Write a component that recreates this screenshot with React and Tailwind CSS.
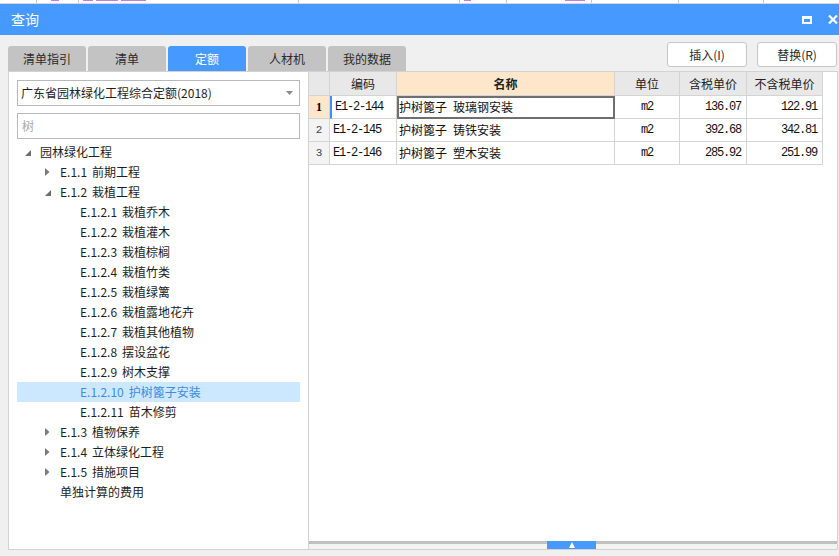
import React from 'react';

const tabs = ['清单指引', '清单', '定额', '人材机', '我的数据'];

const tree = [
  { label: '园林绿化工程', level: 0, toggle: 'open' },
  { label: 'E.1.1 前期工程', level: 1, toggle: 'closed' },
  { label: 'E.1.2 栽植工程', level: 1, toggle: 'open' },
  { label: 'E.1.2.1 栽植乔木', level: 2 },
  { label: 'E.1.2.2 栽植灌木', level: 2 },
  { label: 'E.1.2.3 栽植棕榈', level: 2 },
  { label: 'E.1.2.4 栽植竹类', level: 2 },
  { label: 'E.1.2.5 栽植绿篱', level: 2 },
  { label: 'E.1.2.6 栽植露地花卉', level: 2 },
  { label: 'E.1.2.7 栽植其他植物', level: 2 },
  { label: 'E.1.2.8 摆设盆花', level: 2 },
  { label: 'E.1.2.9 树木支撑', level: 2 },
  { label: 'E.1.2.10 护树篦子安装', level: 2, selected: true },
  { label: 'E.1.2.11 苗木修剪', level: 2 },
  { label: 'E.1.3 植物保养', level: 1, toggle: 'closed' },
  { label: 'E.1.4 立体绿化工程', level: 1, toggle: 'closed' },
  { label: 'E.1.5 措施项目', level: 1, toggle: 'closed' },
  { label: '单独计算的费用', level: 1 },
];

const rows = [
  { code: 'E1-2-144', name: '护树篦子\u2002玻璃钢安装', unit: 'm2', tax: '136.07', notax: '122.91' },
  { code: 'E1-2-145', name: '护树篦子\u2002铸铁安装', unit: 'm2', tax: '392.68', notax: '342.81' },
  { code: 'E1-2-146', name: '护树篦子\u2002塑木安装', unit: 'm2', tax: '285.92', notax: '251.99' },
];

const indent = ['pl-0', 'pl-[20px]', 'pl-[40px]'];

function Toggle({ type }) {
  if (type === 'open') {
    return (
      <svg width="7" height="7" viewBox="0 0 7 7" className="mt-[3px]">
        <polygon points="6,0 6,6 0,6" fill="#6e6e6e" />
      </svg>
    );
  }
  if (type === 'closed') {
    return (
      <svg width="5" height="8" viewBox="0 0 5 8">
        <polygon points="0,0 4.5,4 0,8" fill="#7a7a7a" />
      </svg>
    );
  }
  return null;
}

function TreeRow({ item }) {
  // split code and title so the gap between them is a bit wider, like the original font
  const sp = item.label.indexOf(' ');
  const code = sp > 0 ? item.label.slice(0, sp) : '';
  const title = sp > 0 ? item.label.slice(sp + 1) : item.label;
  return (
    <div
      className={
        'h-[20px] flex items-center ' +
        indent[item.level] +
        (item.selected ? ' bg-[#cce8ff] text-[#3d8de0]' : ' text-[#1e1e1e]')
      }
    >
      <div className="w-[23px] pl-[8px] flex items-center">
        <Toggle type={item.toggle} />
      </div>
      <span className="text-[12px] whitespace-nowrap">
        {code && <span className="mr-[5px]">{code}</span>}
        {title}
      </span>
    </div>
  );
}

function TopStrip() {
  // a sliver of the window that sits behind the dialog
  return (
    <div className="h-[4px] bg-white flex border-b border-[#d6d6d6] overflow-hidden">
      <div className="w-[37px] border-r border-[#c8c8c8]" />
      <div className="w-[42px] border-r border-[#c8c8c8] flex items-start pl-[14px]">
        <div className="w-[8px] h-[1px] bg-[#c77be0]" />
      </div>
      <div className="w-[220px] border-r border-[#c8c8c8] flex gap-[3px] pl-[4px]">
        <div className="w-[10px] h-[1px] bg-[#c77be0]" />
        <div className="w-[22px] h-[1px] bg-[#c77be0]" />
        <div className="w-[25px] h-[1px] bg-[#c77be0]" />
      </div>
      <div className="w-[161px] border-r border-[#c8c8c8]" />
      <div className="w-[47px] border-r border-[#c8c8c8] flex pl-[4px]">
        <div className="w-[7px] h-[1px] bg-[#c77be0]" />
      </div>
      <div className="w-[85px] border-r border-[#c8c8c8] flex pl-[58px]">
        <div className="w-[20px] h-[1px] bg-[#c77be0]" />
      </div>
      <div className="w-[87px] border-r border-[#c8c8c8]" />
      <div className="w-[85px] border-r border-[#c8c8c8]" />
    </div>
  );
}

function Grid() {
  const th = 'h-[24px] border-r border-b border-[#d4d4d4] flex items-center justify-center text-[12px] text-[#222]';
  const td = 'h-[23px] border-r border-b border-[#d4d4d4] flex items-center';
  const mono = "font-['Liberation_Mono',monospace] text-[12px] tracking-[-1.2px] text-[#111]";
  return (
    <div className="w-[514px]">
      <div className="flex bg-[#e8e8e8]">
        <div className={th + ' w-[21px]'} />
        <div className={th + ' w-[67px]'}>编码</div>
        <div className={th + ' w-[218px] bg-[#fde6c9] font-bold'}>名称</div>
        <div className={th + ' w-[65px]'}>单位</div>
        <div className={th + ' w-[67px]'}>含税单价</div>
        <div className={th + ' w-[76px]'}>不含税单价</div>
      </div>
      {rows.map((r, i) => {
        const first = i === 0;
        return (
          <div key={r.code} className="flex bg-white">
            <div
              className={
                td +
                ' w-[21px] justify-center ' +
                (first ? "bg-[#fde6c9] font-bold font-['Liberation_Serif',serif] text-[12px]" : "bg-[#f3f3f3] font-['Liberation_Mono',monospace] text-[11px] text-[#444]")
              }
            >
              {i + 1}
            </div>
            <div className={td + ' w-[67px] pl-[3px] ' + (first ? 'border-l-2 border-l-[#3d8fff] pl-[1px]' : '')}>
              <span className={mono}>{r.code}</span>
            </div>
            <div className={td + ' w-[218px] pl-[2px] text-[12px] text-[#111] ' + (first ? 'outline-2 outline-[#6f6f6f] -outline-offset-2' : '')}>
              {r.name}
            </div>
            <div className={td + ' w-[65px] justify-center'}>
              <span className={mono}>{r.unit}</span>
            </div>
            <div className={td + ' w-[67px] justify-end pr-[5px]'}>
              <span className={mono}>{r.tax}</span>
            </div>
            <div className={td + ' w-[76px] justify-end pr-[5px]'}>
              <span className={mono}>{r.notax}</span>
            </div>
          </div>
        );
      })}
    </div>
  );
}

export default function App() {
  return (
    <div className="w-[839px] h-[556px] bg-[#f0f0f0] flex flex-col overflow-hidden font-['Noto_Sans_CJK_SC','Noto_Sans',sans-serif]">
      <TopStrip />

      {/* title bar */}
      <div className="h-[31px] bg-[#4599ff] flex items-center pl-[11px] text-white">
        <span className="text-[14px]">查询</span>
        <div className="ml-auto flex items-center gap-[16px] pr-[1px]">
          <div className="w-[10px] h-[8px] border-2 border-t-[3px] border-white" />
          <svg width="10" height="9" viewBox="0 0 10 9">
            <path d="M1 0.5 L9 8.5 M9 0.5 L1 8.5" stroke="#fff" strokeWidth="2.2" />
          </svg>
        </div>
      </div>

      {/* tabs + buttons */}
      <div className="h-[36px] flex items-end pl-[8px] pr-[2px]">
        <div className="flex gap-[2px]">
          {tabs.map((t) => (
            <div
              key={t}
              className={
                'w-[78px] h-[25px] rounded-t-[3px] flex items-center justify-center text-[12px] ' +
                (t === '定额' ? 'bg-[#4599ff] text-white' : 'bg-[#c3c3c3] text-[#2a2a2a]')
              }
            >
              {t}
            </div>
          ))}
        </div>
        <div className="ml-auto self-start mt-[7px] flex gap-[10px]">
          <button className="w-[80px] h-[25px] bg-white border border-[#c6c6c6] rounded-[3px] text-[12px] text-[#2a2a2a]">
            插入(I)
          </button>
          <button className="w-[80px] h-[25px] bg-white border border-[#c6c6c6] rounded-[3px] text-[12px] text-[#2a2a2a]">
            替换(R)
          </button>
        </div>
      </div>

      {/* main */}
      <div className="h-[479px] flex pl-[8px]">
        {/* left panel */}
        <div className="w-[301px] bg-white border border-[#d2d2d2] flex flex-col pt-[8px] px-[8px]">
          <div className="h-[26px] border border-[#b9b9b9] flex items-center pl-[3px] pr-[6px]">
            <span className="text-[12px] text-[#1e1e1e] whitespace-nowrap">广东省园林绿化工程综合定额(2018)</span>
            <svg width="7" height="4" viewBox="0 0 7 4" className="ml-auto">
              <polygon points="0,0 7,0 3.5,4" fill="#8a8a8a" />
            </svg>
          </div>
          <div className="mt-[7px] h-[26px] border border-[#b9b9b9] flex items-center pl-[4px]">
            <span className="text-[12px] text-[#a8a8a8]">树</span>
          </div>
          <div className="mt-[3px]">
            {tree.map((item) => (
              <TreeRow key={item.label} item={item} />
            ))}
          </div>
        </div>

        {/* right panel */}
        <div className="w-[529px] border border-[#d2d2d2] border-l-0 flex flex-col bg-white">
          <Grid />
          <div className="flex-1 bg-white" />
          <div className="h-[8px] relative bg-[#f3f3f3]">
            <div className="h-[3px] bg-[#c0c0c0]" />
            <div className="absolute left-[238px] top-0 w-[49px] h-[8px] bg-[#4599ff] flex items-center justify-center">
              <svg width="6" height="6" viewBox="0 0 6 6">
                <polygon points="3,0 6,6 0,6" fill="#fff" />
              </svg>
            </div>
          </div>
        </div>
      </div>
    </div>
  );
}
